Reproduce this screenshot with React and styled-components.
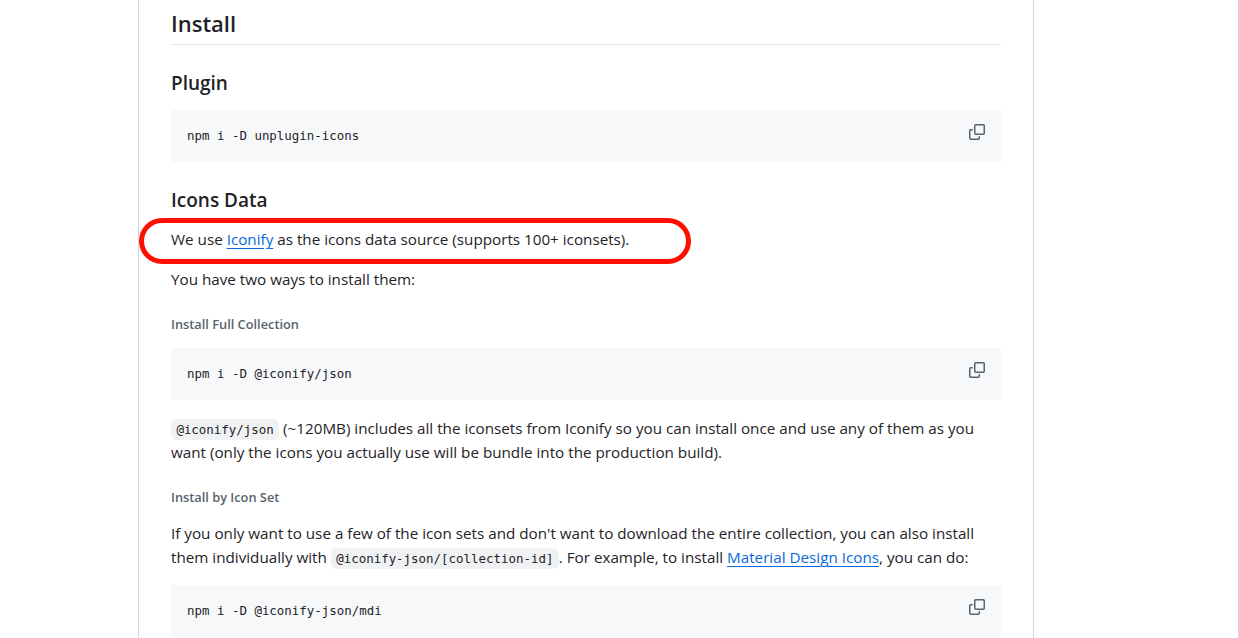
import React from 'react'
import styled, { createGlobalStyle } from 'styled-components'

const GlobalStyle = createGlobalStyle`
  html, body {
    margin: 0;
    height: 638px;
    overflow: hidden;
    background: #fff;
  }
`

const Page = styled.div`
  padding-left: 138px;
  height: 638px;
  overflow: hidden;
`

const Article = styled.article`
  box-sizing: border-box;
  width: 896px;
  height: 638px;
  padding: 9px 32px 0;
  border-left: 1px solid #d1d9e0;
  border-right: 1px solid #d1d9e0;
  color: #1f2328;
  font-family: "Open Sans", "Noto Sans", sans-serif;
  font-size: 15.23px;
  line-height: 24px;
`

const Title = styled.h2`
  margin: 0;
  padding-bottom: 7px;
  border-bottom: 1px solid #d1d9e0b3;
  font-size: 22px;
  font-weight: 600;
  line-height: 28px;
`

const Heading = styled.h3`
  margin: 26px 0 0;
  font-size: 19px;
  font-weight: 600;
  line-height: 25px;
`

const SubHeading = styled.h5`
  margin: ${p => p.$top}px 0 0;
  color: #59636e;
  font-size: 12.8px;
  font-weight: 600;
  line-height: 18px;
`

const Paragraph = styled.p`
  position: relative;
  margin: ${p => p.$top ?? 16}px 0 0;
  white-space: nowrap;
`

const Link = styled.a`
  color: #0969da;
  text-decoration: underline;
  text-underline-offset: 3px;
`

const InlineCode = styled.code`
  padding: 3px 5.4px;
  border-radius: 6px;
  background: #818b981f;
  font-family: "DejaVu Sans Mono", monospace;
  font-size: 12.45px;
  line-height: 1;
`

const CodeBlock = styled.div`
  position: relative;
  box-sizing: border-box;
  height: 52px;
  margin-top: ${p => p.$top ?? 14}px;
  padding: 14px 16px;
  background: #f6f8fa;
  font-family: "DejaVu Sans Mono", monospace;
  font-size: 12.45px;
  line-height: 24px;
`

const CopyIcon = styled.svg`
  position: absolute;
  top: 14px;
  right: 16px;
  width: 16px;
  height: 16px;
  fill: #59636e;
`

const Highlight = styled.div`
  position: absolute;
  top: -9px;
  left: -32px;
  width: 552px;
  height: 46px;
  box-sizing: border-box;
  border: 5px solid #ff0f00;
  border-radius: 23px;
  pointer-events: none;
`

const Code = ({ children, top }) => (
  <CodeBlock $top={top}>
    {children}
    <CopyIcon viewBox="0 0 16 16">
      <path d="M0 6.75C0 5.784.784 5 1.75 5h1.5a.75.75 0 0 1 0 1.5h-1.5a.25.25 0 0 0-.25.25v7.5c0 .138.112.25.25.25h7.5a.25.25 0 0 0 .25-.25v-1.5a.75.75 0 0 1 1.5 0v1.5A1.75 1.75 0 0 1 9.25 16h-7.5A1.75 1.75 0 0 1 0 14.25Z" />
      <path d="M5 1.75C5 .784 5.784 0 6.75 0h7.5C15.216 0 16 .784 16 1.75v7.5A1.75 1.75 0 0 1 14.25 11h-7.5A1.75 1.75 0 0 1 5 9.25Zm1.75-.25a.25.25 0 0 0-.25.25v7.5c0 .138.112.25.25.25h7.5a.25.25 0 0 0 .25-.25v-7.5a.25.25 0 0 0-.25-.25Z" />
    </CopyIcon>
  </CodeBlock>
)

const App = () => {
  return (
    <Page>
      <GlobalStyle />
      <Article>
        <Title>Install</Title>
        <Heading>Plugin</Heading>
        <Code>npm i -D unplugin-icons</Code>
        <Heading>Icons Data</Heading>
        <Paragraph $top={14}>
          We use <Link href="#">Iconify</Link> as the icons data source (supports 100+ iconsets).
          <Highlight />
        </Paragraph>
        <Paragraph>You have two ways to install them:</Paragraph>
        <SubHeading $top={24}>Install Full Collection</SubHeading>
        <Code top={15}>npm i -D @iconify/json</Code>
        <Paragraph $top={16}>
          <InlineCode>@iconify/json</InlineCode> (~120MB) includes all the iconsets from Iconify so you can install once and use any of them as you
          <br />
          want (only the icons you actually use will be bundle into the production build).
        </Paragraph>
        <SubHeading $top={24}>Install by Icon Set</SubHeading>
        <Paragraph $top={15}>
          If you only want to use a few of the icon sets and don't want to download the entire collection, you can also install
          <br />
          them individually with <InlineCode>@iconify-json/[collection-id]</InlineCode>. For example, to install <Link href="#">Material Design Icons</Link>, you can do:
        </Paragraph>
        <Code top={16}>npm i -D @iconify-json/mdi</Code>
      </Article>
    </Page>
  )
}

export default App
